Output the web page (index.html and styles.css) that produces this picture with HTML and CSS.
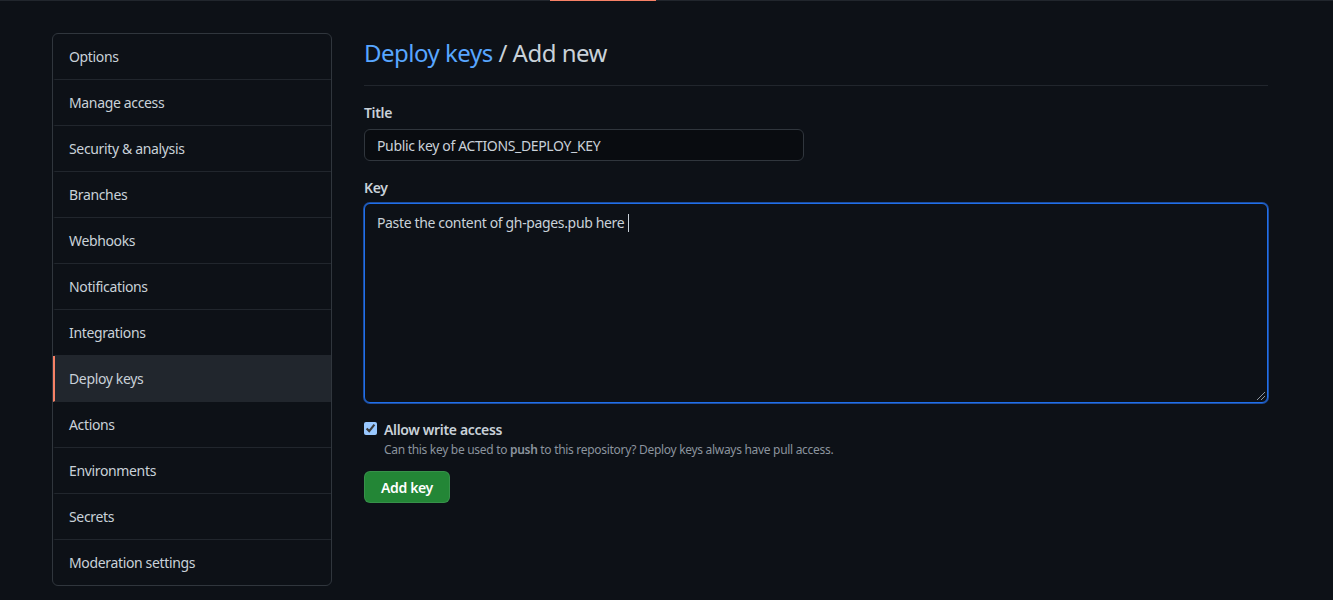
FILE: index.html
```html
<!DOCTYPE html>
<html lang="en">
<head>
<meta charset="utf-8">
<title>Deploy keys · Add new</title>
<link rel="stylesheet" href="styles.css">
</head>
<body>
<div class="topbar"><span class="tab-underline"></span></div>
<div class="layout">
  <nav class="menu">
    <a class="menu-item" href="#">Options</a>
    <a class="menu-item" href="#">Manage access</a>
    <a class="menu-item" href="#">Security &amp; analysis</a>
    <a class="menu-item" href="#">Branches</a>
    <a class="menu-item" href="#">Webhooks</a>
    <a class="menu-item" href="#">Notifications</a>
    <a class="menu-item" href="#">Integrations</a>
    <a class="menu-item selected" href="#">Deploy keys</a>
    <a class="menu-item" href="#">Actions</a>
    <a class="menu-item" href="#">Environments</a>
    <a class="menu-item" href="#">Secrets</a>
    <a class="menu-item" href="#">Moderation settings</a>
  </nav>
  <main class="main">
    <div class="subhead">
      <h2 class="subhead-heading"><a href="#" class="crumb">Deploy keys</a> / Add new</h2>
    </div>
    <form class="form">
      <div class="form-group">
        <label class="label" for="title">Title</label>
        <input id="title" class="input" type="text" value="Public key of ACTIONS_DEPLOY_KEY">
      </div>
      <div class="form-group">
        <label class="label" for="key">Key</label>
        <div class="textarea"><span class="ta-text">Paste the content of gh-pages.pub here</span><span class="caret"></span><span class="grip"></span></div>
      </div>
      <div class="check">
        <input id="write" class="checkbox" type="checkbox" checked>
        <div class="check-body">
          <label class="check-label" for="write">Allow write access</label>
          <p class="note">Can this key be used to <strong>push</strong> to this repository? Deploy keys always have pull access.</p>
        </div>
      </div>
      <button class="btn" type="button">Add key</button>
    </form>
  </main>
</div>
</body>
</html>
```
FILE: styles.css
```css
html, body {
  margin: 0;
  padding: 0;
  background: #0d1117;
}
body {
  font-family: "Noto Sans", "Liberation Sans", sans-serif;
  font-size: 14px;
  line-height: 1.5;
  letter-spacing: -0.35px;
  color: #c9d1d9;
  height: 600px;
  overflow: hidden;
}
.topbar {
  height: 1px;
  background: #21262d;
  display: flex;
  padding-left: 550px;
}
.tab-underline {
  width: 106px;
  height: 1px;
  background: #f78166;
}
.layout {
  display: flex;
  gap: 32px;
  padding: 32px 0 0 52px;
}
.menu {
  width: 280px;
  flex: none;
  border: 1px solid #30363d;
  border-radius: 6px;
  overflow: hidden;
  display: flex;
  flex-direction: column;
  box-sizing: border-box;
}
.menu-item {
  display: flex;
  align-items: center;
  height: 46px;
  box-sizing: border-box;
  padding: 0 16px 0 14px;
  color: #c9d1d9;
  text-decoration: none;
  border-bottom: 1px solid #21262d;
  border-left: 2px solid transparent;
}
.menu-item:last-child {
  border-bottom: 0;
  height: 45px;
}
.menu-item.selected {
  background: #21262d;
  border-left-color: #f78166;
}
.main {
  width: 904px;
  flex: none;
}
.subhead {
  border-bottom: 1px solid #21262d;
  padding: 0 0 8px;
  height: 44px;
}
.subhead-heading {
  margin: 0;
  font-size: 24px;
  font-weight: 400;
  line-height: 1.5;
  letter-spacing: -0.5px;
  color: #c9d1d9;
  padding-top: 2px;
}
.crumb {
  color: #58a6ff;
  text-decoration: none;
}
.form {
  padding-top: 16px;
}
.form-group {
  margin-bottom: 16px;
}
.label {
  display: block;
  font-weight: 600;
  line-height: 21px;
  margin-bottom: 6px;
}
.form-group:nth-child(2) .label {
  margin-bottom: 5px;
}
.input {
  display: block;
  width: 440px;
  height: 32px;
  box-sizing: border-box;
  padding: 5px 12px;
  font: inherit;
  font-size: 14px;
  letter-spacing: -0.35px;
  color: #c9d1d9;
  background: #090c10;
  border: 1px solid #30363d;
  border-radius: 6px;
  outline: none;
}
.textarea {
  position: relative;
  height: 200px;
  box-sizing: border-box;
  padding: 9px 12px;
  background: #0d1117;
  border: 1px solid #1f6feb;
  border-radius: 6px;
  box-shadow: 0 0 0 1px #1f4e9e;
  display: flex;
  align-items: flex-start;
}
.ta-text {
  line-height: 20px;
}
.caret {
  display: inline-block;
  width: 1px;
  height: 18px;
  margin-top: 1px;
  margin-left: 4px;
  background: #c9d1d9;
}
.grip {
  position: absolute;
  right: 2px;
  bottom: 2px;
  width: 8px;
  height: 8px;
  background: linear-gradient(135deg, transparent 45%, #8b949e 46%, #8b949e 52%, transparent 53%, transparent 70%, #8b949e 71%, #8b949e 77%, transparent 78%);
}
.check {
  display: flex;
  gap: 7px;
  margin-top: 16px;
}
.checkbox {
  color-scheme: dark;
  margin: 3px 0 0;
  width: 13px;
  height: 13px;
  flex: none;
}
.check-body {
  display: flex;
  flex-direction: column;
}
.check-label {
  font-weight: 600;
  line-height: 21px;
}
.note {
  margin: 1px 0 0;
  font-size: 12px;
  line-height: 18px;
  letter-spacing: -0.3px;
  color: #8b949e;
}
.note strong {
  font-weight: 600;
  color: #8b949e;
}
.btn {
  margin-top: 12px;
  height: 32px;
  padding: 0 16px;
  font: inherit;
  font-size: 14px;
  font-weight: 600;
  letter-spacing: -0.35px;
  color: #ffffff;
  background: #238636;
  border: 1px solid rgba(240, 246, 252, 0.1);
  border-radius: 6px;
}
```
